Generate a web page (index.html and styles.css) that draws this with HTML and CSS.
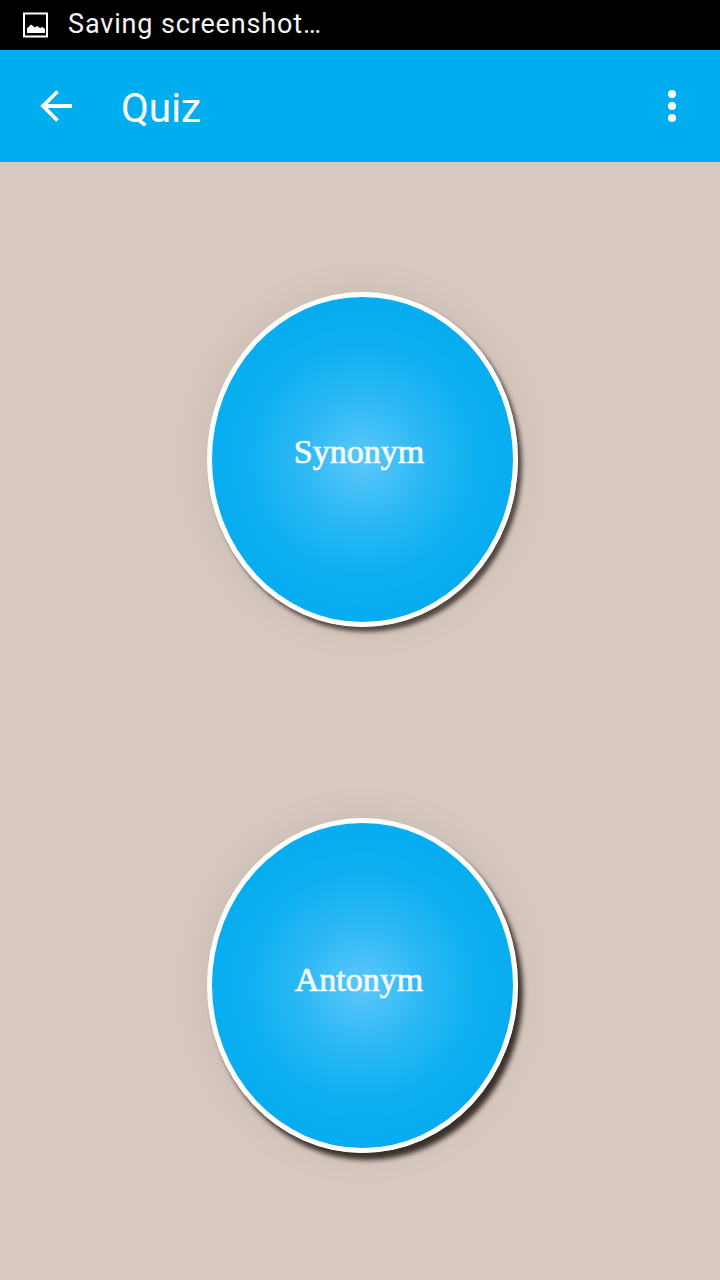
FILE: index.html
```html
<!DOCTYPE html>
<html>
<head>
	<meta charset="UTF-8">
	<title>Quiz</title>
	<link rel="stylesheet" href="styles.css">
</head>
<body>
	<div class="statusbar">
		<svg class="status-icon" width="26" height="26" viewBox="0 0 26 26">
			<rect x="1" y="1.5" width="23" height="23" fill="none" stroke="#fff" stroke-width="2"/>
			<path d="M4 21V16.500L8 12.500L12 15.500L14 14L17 16L19.500 15L22 17V21Z" fill="#fff"/>
		</svg>
		<span class="status-text">Saving screenshot…</span>
	</div>
	<div class="appbar">
		<svg class="back" width="36" height="36" viewBox="0 0 36 36">
			<path d="M33 18H4M18.500 3.500L4 18L18.500 32.500" fill="none" stroke="#fff" stroke-width="3.800"/>
		</svg>
		<span class="title">Quiz</span>
		<div class="menu">
			<i></i>
			<i></i>
			<i></i>
		</div>
	</div>
	<div class="content">
		<div class="circle"><span>Synonym</span></div>
		<div class="circle circle-low"><span>Antonym</span></div>
	</div>
</body>
</html>
```

FILE: styles.css
```css
*{margin: 0;padding: 0;box-sizing: border-box;}
html,body{width: 720px;height: 1280px;overflow: hidden;}
body{background: #d7c9c1;font-family: Roboto, sans-serif;color: #fff;}

.statusbar{height: 50px;background: #000;display: flex;align-items: center;padding-left: 23px;}
.status-icon{flex: none;}
.status-text{margin-left: 19px;font-size: 27px;letter-spacing: .85px;color: #f4f4f4;margin-bottom: 3px;}

.appbar{height: 112px;background: #00aef0;display: flex;align-items: center;padding: 0 44px 0 39px;}
.back{flex: none;width: 36px;height: 36px;margin-bottom: 1px;}
.title{margin-left: 46px;font-size: 40.500px;margin-top: 3px;}
.menu{margin-left: auto;display: flex;flex-direction: column;gap: 4px;margin-bottom: 1px;}
.menu i{display: block;width: 8px;height: 8px;border-radius: 50%;background: #fff;}

.content{height: 1118px;padding: 130px 0 0 207px;display: flex;flex-direction: column;gap: 191px;}
.circle{width: 311px;height: 335px;border-radius: 50%;border: 5px solid #fff;background: radial-gradient(circle at 50% 50%, #5cc8fa 0, #2fb9f5 58px, #0fb0f1 112px, #07adf0 155px);box-shadow: 4px 5px 4px rgba(30,20,15,.7), 0 0 34px rgba(120,95,80,.14);display: flex;align-items: center;justify-content: center;}
.circle span{font-family: "Liberation Serif", serif;font-size: 34px;color: #f6fbfe;-webkit-text-stroke: .7px #f6fbfe;margin: 0 7px 16px 0;}
.circle-low{box-shadow: 5px 7px 5px rgba(20,12,8,.8), 0 0 34px rgba(120,95,80,.14);}
.circle-low span{margin-bottom: 12px;}
```
